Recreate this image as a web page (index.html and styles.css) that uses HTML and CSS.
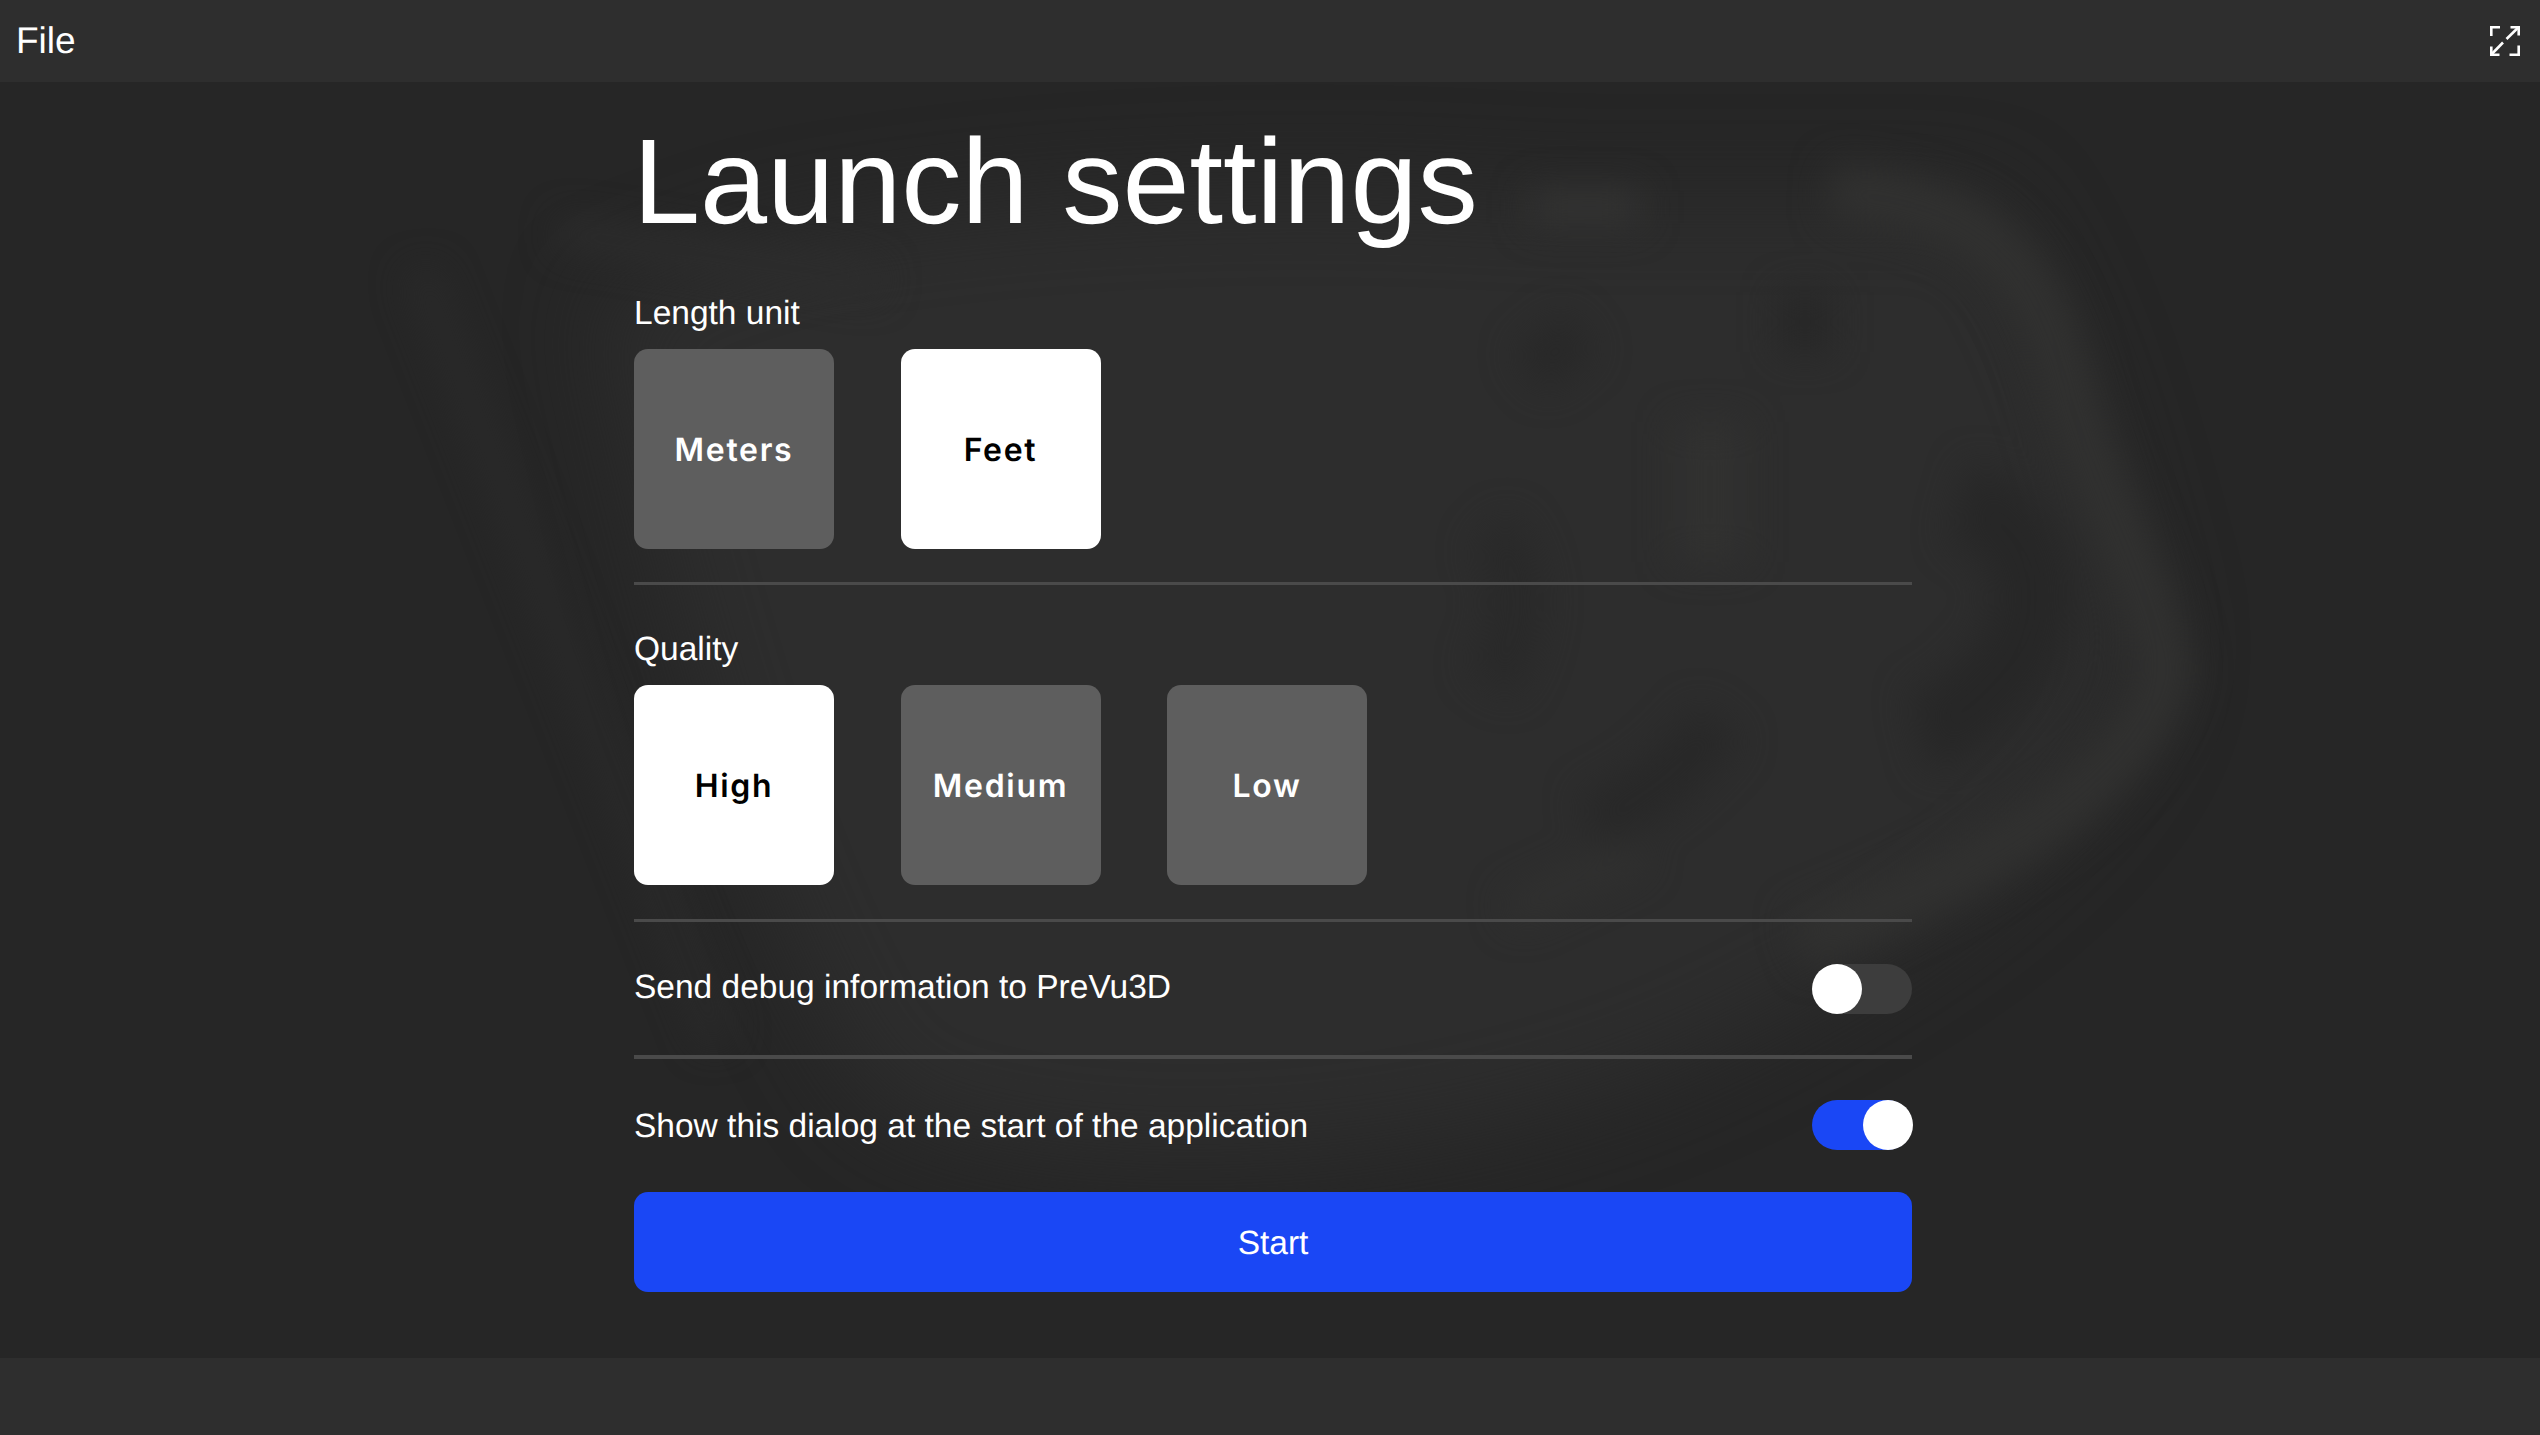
FILE: index.html
```html
<!DOCTYPE html>
<html lang="en">
<head>
    <meta charset="UTF-8">
    <title>Launch settings</title>
    <link rel="stylesheet" href="styles.css">
</head>
<body>
    <header class="topbar">
        <span class="menu">File</span>
        <svg class="expand" viewBox="0 0 30 30" fill="none" stroke="#fff" stroke-width="2.6">
            <path d="M10 1.3H1.3V10"/>
            <path d="M19.5 28.7H28.7V19.5"/>
            <path d="M16.5 13L28 1.8"/>
            <path d="M20.5 1.3H28.7V9.5"/>
            <path d="M13 16.5L1.8 28"/>
            <path d="M9.5 28.7H1.3V20.5"/>
        </svg>
    </header>

    <main class="stage">
        <!-- blurred model behind the dialog -->
        <svg class="ghost" viewBox="0 0 2540 1276" fill="none">
            <defs>
                <filter id="wide" x="-20%" y="-20%" width="140%" height="140%" color-interpolation-filters="sRGB">
                    <feGaussianBlur stdDeviation="45"/>
                </filter>
                <filter id="soft" x="-20%" y="-20%" width="140%" height="140%" color-interpolation-filters="sRGB">
                    <feGaussianBlur stdDeviation="18"/>
                </filter>
            </defs>
            <path filter="url(#wide)" d="M760 160C1000 110 1300 100 1560 120L1980 120C2070 230 2110 420 2150 560C2130 730 1900 880 1680 980C1400 1100 1040 1100 880 1020C760 860 660 500 600 220Z" fill="#2d2d2d"/>
            <g filter="url(#soft)">
                <path d="M1530 125H1640" stroke="#343433" stroke-width="34"/>
                <path d="M1830 110C1990 120 2040 190 2070 320C2100 420 2150 500 2165 590C2140 700 1980 790 1800 860" stroke="#313130" stroke-width="55"/>
                <path d="M1710 340V480" stroke="#313130" stroke-width="70"/>
                <path d="M1780 240H1830" stroke="#272727" stroke-width="60"/>
                <path d="M1530 290L1580 250" stroke="#282828" stroke-width="50"/>
                <path d="M1960 420C2030 440 2050 510 2020 570C1990 610 1960 640 1920 650" stroke="#272727" stroke-width="80"/>
                <path d="M1720 640C1680 690 1640 720 1590 740" stroke="#282828" stroke-width="55"/>
                <path d="M1490 450C1530 490 1520 560 1490 600" stroke="#292929" stroke-width="50"/>
                <path d="M1510 830L1640 770" stroke="#313130" stroke-width="30"/>
                <path d="M420 190L720 960" stroke="#2a2a2a" stroke-width="30"/>
                <path d="M560 150L880 200" stroke="#2d2d2d" stroke-width="28"/>
            </g>
        </svg>

        <div class="dialog">
            <h1 class="title">Launch settings</h1>

            <section class="group">
                <div class="label">Length unit</div>
                <div class="options">
                    <button class="option">Meters</button>
                    <button class="option selected">Feet</button>
                </div>
            </section>

            <section class="group">
                <div class="label">Quality</div>
                <div class="options">
                    <button class="option selected">High</button>
                    <button class="option">Medium</button>
                    <button class="option">Low</button>
                </div>
            </section>

            <div class="setting debug">
                <span class="setting-text">Send debug information to PreVu3D</span>
                <span class="toggle"></span>
            </div>

            <div class="setting startup">
                <span class="setting-text">Show this dialog at the start of the application</span>
                <span class="toggle on"></span>
            </div>

            <button class="start">Start</button>
        </div>
    </main>

    <footer class="bottombar"></footer>
</body>
</html>
```

FILE: styles.css
```css
/* page */
html, body {
    height: 100%;
}
body {
    margin: 0;
    display: flex;
    flex-direction: column;
    overflow: hidden;
    font-family: "Liberation Sans", Arial, sans-serif;
    text-rendering: geometricPrecision;
    color: #fff;
    background-color: #262626;
}
button {
    font-family: inherit;
    text-rendering: inherit;
    border: none;
    padding: 0;
}

/* top and bottom bars */
.topbar {
    flex: 0 0 82px;
    display: flex;
    align-items: center;
    justify-content: space-between;
    padding: 0 20px 0 16px;
    background-color: #2e2e2e;
}
.menu {
    font-size: 37px;
}
.expand {
    width: 30px;
    height: 30px;
}
.bottombar {
    flex: 0 0 77px;
    background-color: #2e2e2e;
}

/* middle area */
.stage {
    flex: 1;
    position: relative;
    overflow: hidden;
}
.ghost {
    position: absolute;
    top: 0;
    left: 0;
    width: 2540px;
    height: 1276px;
}
.dialog {
    position: relative;
    width: 1278px;
    margin-left: 634px;
}
.title {
    margin: 0 0 0 -1px;
    font-size: 120.6px;
    font-weight: 400;
    line-height: 138px;
    padding-top: 31px;
    padding-bottom: 44px;
}

/* unit and quality choices */
.group {
    border-bottom: 3px solid #4a4a4a;
    padding-bottom: 33px;
    margin-bottom: 46px;
}
.group + .group {
    padding-bottom: 34px;
    margin-bottom: 0;
}
.label {
    font-size: 33.5px;
    line-height: 38px;
    margin-bottom: 16px;
}
.options {
    display: flex;
    gap: 66.5px;
}
.option {
    width: 200px;
    height: 200px;
    border-radius: 14px;
    font-family: Inter, "Liberation Sans", sans-serif;
    font-size: 32px;
    font-weight: 600;
    letter-spacing: 1.7px;
    color: #fff;
    background-color: #5e5e5e;
}
.option.selected {
    color: #000;
    background-color: #fff;
}

/* toggle rows */
.setting {
    display: flex;
    align-items: center;
    justify-content: space-between;
    font-size: 33.5px;
}
.debug {
    padding: 42px 0 41px;
    border-bottom: 4px solid #4a4a4a;
}
.debug .setting-text {
    margin-bottom: 3px;
}
.startup {
    padding-top: 41px;
}
.startup .setting-text {
    margin-top: 4px;
}
.toggle {
    position: relative;
    width: 100px;
    height: 50px;
    border-radius: 25px;
    background-color: #3d3d3d;
}
.toggle::after {
    content: "";
    position: absolute;
    top: 0;
    left: 0;
    width: 50px;
    height: 50px;
    border-radius: 50%;
    background-color: #fff;
}
.toggle.on {
    background-color: #1a47f5;
}
.toggle.on::after {
    left: 51px;
}

/* start button */
.start {
    display: block;
    width: 100%;
    height: 100px;
    margin-top: 42px;
    padding-top: 4px;
    border-radius: 14px;
    font-size: 33.5px;
    color: #fff;
    background-color: #1a47f5;
}
```
